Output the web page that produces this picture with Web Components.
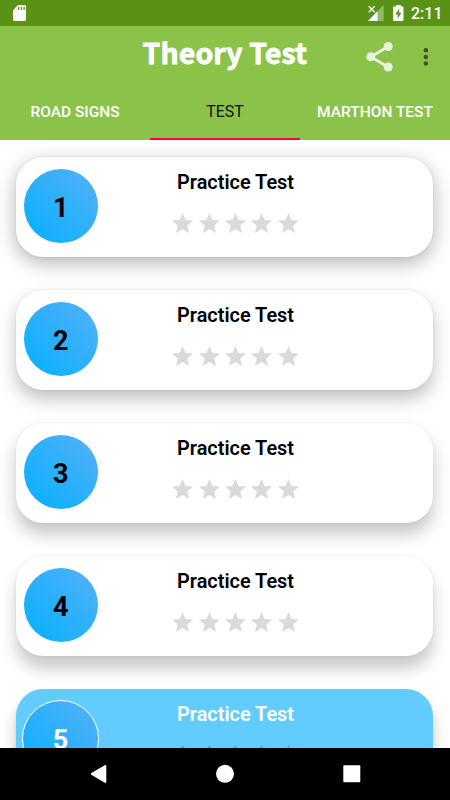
<!DOCTYPE html>
<html lang="en">
<head>
<meta charset="utf-8">
<title>Theory Test</title>
<style>
html,body{margin:0;height:100%}
body{width:450px;height:800px;overflow:hidden;background:#fff;font-family:Roboto,"Liberation Sans",sans-serif}
</style>
</head>
<body>
<theory-app></theory-app>
<script>
const define = (name, html) => {
  const t = document.createElement('template');
  t.innerHTML = html;
  customElements.define(name, class extends HTMLElement {
    constructor() {
      super();
      this.attachShadow({mode: 'open'}).append(t.content.cloneNode(true));
    }
  });
};

define('status-bar', `
<style>
:host{display:flex;align-items:center;box-sizing:border-box;height:26px;padding:0 9px 0 13px;background:#5a9216;color:#fff}
svg{display:block}
.card{margin-right:auto}
.signal{margin-right:8.500px}
.battery{margin-right:7.500px}
span{font-size:16px;line-height:26px;font-weight:500;width:30px;white-space:nowrap;padding-top:2px}
</style>
<svg class="card" width="14" height="26" viewBox="0 0 14 26"><path d="M5 5h6.500q1.500 0 1.500 1.500v13q0 1.500-1.500 1.500H1.500Q0 21 0 19.500V10.500z" fill="#fff"/><path d="M5.600 7v3M8.400 7v3M11.100 7v3" stroke="#5a9216" stroke-width="1.300"/></svg>
<svg class="signal" width="16" height="26" viewBox="0 0 16 26"><path d="M15.700 5v16H0z" fill="#fff" opacity=".35"/><path d="M9.500 11.300V21H0z" fill="#fff"/><path d="M.7 6.300l6 6M6.700 6.300l-6 6" stroke="#fff" stroke-width="1.300"/></svg>
<svg class="battery" width="11" height="26" viewBox="0 0 11 26"><path d="M3 5h4.800v1.600h1.700q1 0 1 1v12.400q0 1-1 1H1q-1 0-1-1V7.600q0-1 1-1h2z" fill="#fff"/><path d="M6.200 8.500L2.300 14.600h2.400v4.200L8.500 12.800H6.200z" fill="#5a9216"/></svg>
<span>2:11</span>`);

define('app-bar', `
<style>
:host{display:grid;grid-template-columns:142.500px 223.500px 46px 20px;height:57px;background:#8bc34a;color:#fff}
h1{margin:0;grid-column:2;font:700 28.500px/51px "Noto Sans CJK SC","Noto Sans",sans-serif;letter-spacing:.1px;-webkit-text-stroke:.8px #fff;white-space:nowrap}
svg{display:block}
</style>
<h1>Theory Test</h1>
<svg width="28" height="57" viewBox="0 0 28 57"><g fill="#e8f3dc"><path d="M22 20.500L5 30.700l17 10.500" fill="none" stroke="#e8f3dc" stroke-width="2.800"/><circle cx="22.200" cy="20.500" r="4.500"/><circle cx="4.800" cy="30.800" r="4.500"/><circle cx="22.200" cy="41" r="4.500"/></g></svg>
<svg width="20" height="57" viewBox="0 0 20 57"><g fill="#3e5721"><circle cx="13.900" cy="24.300" r="2.250"/><circle cx="13.900" cy="31" r="2.250"/><circle cx="13.900" cy="37.600" r="2.250"/></g></svg>`);

define('tab-item', `
<style>
:host{display:flex;align-items:center;justify-content:center;box-sizing:border-box;height:57px;padding-top:3px;border-bottom:2px solid transparent;color:#fff;font-size:15.500px;font-weight:500;white-space:nowrap}
:host([active]){border-bottom-color:#ff0040;color:#0b1005;font-weight:400;font-size:15.900px;padding-top:1px}
</style><slot></slot>`);

define('tab-strip', `
<style>:host{display:grid;grid-template-columns:repeat(3,1fr);height:57px;background:#8bc34a}</style><slot></slot>`);

define('star-rating', `
<style>:host{display:flex;justify-content:center;gap:5.300px;color:#dadada}svg{display:block;width:21px;height:20px}</style>
${'<svg viewBox="2 2 20 19" preserveAspectRatio="none"><path fill="currentColor" d="M12 17.270L18.180 21l-1.640-7.030L22 9.240l-7.190-.61L12 2 9.190 8.630 2 9.240l5.460 4.730L5.820 21z"/></svg>'.repeat(5)}`);

define('test-card', `
<style>
:host{display:grid;grid-template-columns:86px 266.300px;box-sizing:border-box;width:417px;height:100px;border-radius:27px;background:#fff;color:#000;box-shadow:var(--shade)}
.badge{display:flex;align-items:center;justify-content:center;box-sizing:border-box;width:74px;height:74px;margin:12.700px 0 0 7.300px;border-radius:50%;background:linear-gradient(45deg,#04b0ff,#56b0f8);font-size:27px;line-height:32px;font-weight:700;padding-top:3px}
.info{padding-top:13px}
h2{margin:0 0 17.200px;font-size:19.900px;line-height:26px;font-weight:600;text-align:center}
:host([selected]){background:#63ccff;color:#fff}
:host([selected]) .badge{width:77px;height:77px;margin:11.200px 0 0 5.600px;border:1.500px solid #fff}
:host([selected]) star-rating{color:#4b9fc9}
</style>
<div class="badge"><slot name="number"></slot></div>
<div class="info"><h2><slot></slot></h2><star-rating></star-rating></div>`);

define('test-list', `
<style>:host{display:flex;flex-direction:column;box-sizing:border-box;gap:33.100px;height:608px;padding:16.500px 0 0 16.400px;overflow:hidden}
::slotted(*){flex:none}</style><slot></slot>`);

define('nav-bar', `
<style>:host{display:flex;justify-content:space-between;align-items:center;box-sizing:border-box;height:52px;padding:0 89px;background:#000}svg{display:block}</style>
<svg width="19" height="20" viewBox="0 0 19 20"><path d="M2.800 9.800L16.300 2v15.800z" fill="#fff" stroke="#fff" stroke-width="2" stroke-linejoin="round"/></svg>
<svg width="20" height="20" viewBox="0 0 20 20"><circle cx="10" cy="9.800" r="9" fill="#fff"/></svg>
<svg width="19" height="20" viewBox="0 0 19 20"><rect x="1.300" y="1.300" width="17" height="17" rx="1" fill="#fff"/></svg>`);

define('theory-app', `
<style>
:host{display:flex;flex-direction:column;width:450px;height:800px;overflow:hidden}
:host>*{flex:none}
.s1{--shade:0 6px 20px rgba(0,0,0,.30),0 0 2px rgba(0,0,0,.13)}
.s2{--shade:0 9px 18px rgba(0,0,0,.25),0 0 2px rgba(0,0,0,.11)}
.s3{--shade:0 11px 17px rgba(0,0,0,.23),0 0 2px rgba(0,0,0,.08)}
.s4{--shade:0 13px 16px rgba(0,0,0,.21),0 0 3px rgba(0,0,0,.08)}
.s5{--shade:0 12px 15px rgba(0,0,0,.22),0 1px 3px rgba(0,0,0,.08)}
</style>
<status-bar></status-bar>
<app-bar></app-bar>
<tab-strip><tab-item>ROAD SIGNS</tab-item><tab-item active>TEST</tab-item><tab-item>MARTHON TEST</tab-item></tab-strip>
<test-list>
<test-card class="s1"><span slot="number">1</span>Practice Test</test-card>
<test-card class="s2"><span slot="number">2</span>Practice Test</test-card>
<test-card class="s3"><span slot="number">3</span>Practice Test</test-card>
<test-card class="s4"><span slot="number">4</span>Practice Test</test-card>
<test-card class="s5" selected><span slot="number">5</span>Practice Test</test-card>
</test-list>
<nav-bar></nav-bar>`);
</script>
</body>
</html>
